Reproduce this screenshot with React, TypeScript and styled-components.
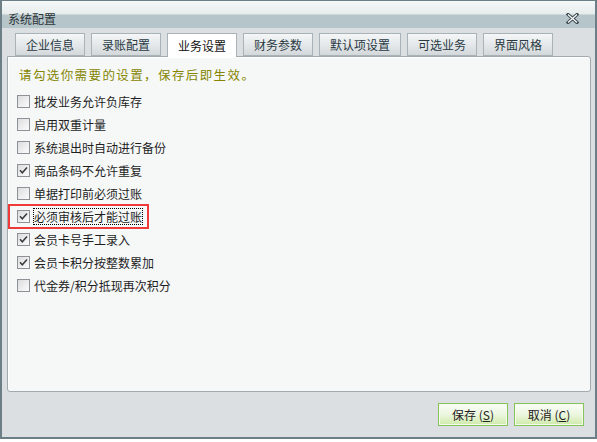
import styled, { createGlobalStyle } from "styled-components";

const GlobalStyle = createGlobalStyle`
    html, body {
        margin: 0;
        padding: 0;
        background: #ffffff;
    }
    body {
        font-family: "Noto Sans CJK SC", "DejaVu Sans", sans-serif;
        font-size: 12px;
        color: #222;
    }
`;

const tabs = ["企业信息", "录账配置", "业务设置", "财务参数", "默认项设置", "可选业务", "界面风格"];

const options = [
    { label: "批发业务允许负库存", checked: false },
    { label: "启用双重计量", checked: false },
    { label: "系统退出时自动进行备份", checked: false },
    { label: "商品条码不允许重复", checked: true },
    { label: "单据打印前必须过账", checked: false },
    { label: "必须审核后才能过账", checked: true, marked: true },
    { label: "会员卡号手工录入", checked: true },
    { label: "会员卡积分按整数累加", checked: true },
    { label: "代金券/积分抵现再次积分", checked: false },
];

const CheckBox = ({ checked }: { checked: boolean }) => (
    <StyledBox>
        {checked && (
            <svg width="9" height="9" viewBox="0 0 9 9">
                <path d="M1 4.2 L3.3 6.8 L8 1.4" fill="none" stroke="#3a3a3a" strokeWidth="1.5" />
            </svg>
        )}
    </StyledBox>
);

const CloseIcon = () => (
    <svg width="13" height="11" viewBox="0 0 13 11">
        <path d="M2 1.5 L11 9.5 M11 1.5 L2 9.5" stroke="#3d4a50" strokeWidth="3.2" strokeLinecap="square" />
        <path d="M2 1.5 L11 9.5 M11 1.5 L2 9.5" stroke="#ffffff" strokeWidth="1.2" />
    </svg>
);

export default function App() {
    return (
        <>
            <GlobalStyle />
            <StyledWindow>
                <StyledTitleBar>
                    <span>系统配置</span>
                    <StyledClose>
                        <CloseIcon />
                    </StyledClose>
                </StyledTitleBar>
                <StyledTabStrip>
                    {tabs.map((t, i) => (
                        <StyledTab key={t} $active={i === 2} $wide={t.length > 4}>
                            {t}
                        </StyledTab>
                    ))}
                </StyledTabStrip>
                <StyledPanel>
                    <StyledHint>请勾选你需要的设置，保存后即生效。</StyledHint>
                    <StyledList>
                        {options.map((o) => (
                            <StyledRow key={o.label} $marked={!!o.marked}>
                                <CheckBox checked={o.checked} />
                                <StyledLabel $focused={!!o.marked}>{o.label}</StyledLabel>
                            </StyledRow>
                        ))}
                    </StyledList>
                </StyledPanel>
                <StyledFooter>
                    <StyledButton>
                        保存 (<u>S</u>)
                    </StyledButton>
                    <StyledButton>
                        取消 (<u>C</u>)
                    </StyledButton>
                </StyledFooter>
            </StyledWindow>
        </>
    );
}

const StyledWindow = styled.div`
    width: 597px;
    height: 439px;
    box-sizing: border-box;
    border: 2px solid #6c7f86;
    border-top-width: 1px;
    background: #dcdfe2;
    display: flex;
    flex-direction: column;
`;

const StyledTitleBar = styled.div`
    height: 27px;
    flex: none;
    box-sizing: border-box;
    padding: 8px 6px 0 6px;
    display: flex;
    align-items: center;
    justify-content: space-between;
    background: linear-gradient(
        to bottom,
        #f6f8f8 0%,
        #e6ecec 48%,
        #b5c5c9 52%,
        #b5c5c9 100%
    );
    color: #2c3438;
    font-size: 12px;
`;

const StyledClose = styled.div`
    display: flex;
    align-items: center;
    margin-right: 10px;
`;

const StyledTabStrip = styled.div`
    display: flex;
    gap: 6px;
    margin-top: 5px;
    padding-left: 13px;
    height: 23px;
    flex: none;
`;

const StyledTab = styled.div<{ $active: boolean; $wide: boolean }>`
    width: ${(p) => (p.$wide ? 82 : 70)}px;
    box-sizing: border-box;
    height: ${(p) => (p.$active ? 24 : 23)}px;
    border: 1px solid #a9b2b7;
    border-bottom: ${(p) => (p.$active ? "none" : "1px solid #a9b2b7")};
    background: ${(p) =>
        p.$active ? "#ffffff" : "linear-gradient(to bottom, #f4f6f7 0%, #e3e7e9 55%, #d3d8db 100%)"};
    color: ${(p) => (p.$active ? "#111" : "#2a3a44")};
    display: flex;
    align-items: center;
    justify-content: center;
    font-size: 12px;
    position: relative;
    z-index: ${(p) => (p.$active ? 2 : 1)};
`;

const StyledPanel = styled.div`
    margin: 0 4px 0 5px;
    height: 336px;
    flex: none;
    box-sizing: border-box;
    border: 1px solid #a2aaae;
    border-radius: 0 3px 3px 3px;
    box-shadow: inset 1px 1px 0 #ffffff;
    background: #f6f8f8;
    padding: 10px 0 0 0;
`;

const StyledHint = styled.div`
    color: #858500;
    font-size: 12.5px;
    letter-spacing: 1.4px;
    line-height: 16px;
    padding-left: 11px;
`;

const StyledList = styled.div`
    display: flex;
    flex-direction: column;
    margin-top: 7px;
`;

const StyledRow = styled.div<{ $marked: boolean }>`
    height: ${(p) => (p.$marked ? 25 : 23)}px;
    margin: ${(p) => (p.$marked ? "-1px 0" : "0")};
    display: flex;
    align-items: center;
    gap: 4px;
    box-sizing: border-box;
    width: 141px;
    padding-left: ${(p) => (p.$marked ? 7 : 9)}px;
    border: ${(p) => (p.$marked ? "2px solid #f03a3a" : "none")};
`;

const StyledBox = styled.div`
    width: 13px;
    height: 13px;
    flex: none;
    box-sizing: border-box;
    border: 1px solid #8e9296;
    background: linear-gradient(135deg, #dcdcdc 0%, #f0f0f0 60%, #fafafa 100%);
    display: flex;
    align-items: center;
    justify-content: center;
`;

const StyledLabel = styled.span<{ $focused: boolean }>`
    white-space: nowrap;
    line-height: 15px;
    color: #1e1e1e;
    outline: ${(p) => (p.$focused ? "1px dotted #000" : "none")};
`;

const StyledFooter = styled.div`
    flex: 1;
    display: flex;
    justify-content: flex-end;
    align-items: flex-start;
    gap: 6px;
    padding: 11px 11px 0 0;
`;

const StyledButton = styled.button`
    width: 70px;
    height: 23px;
    box-sizing: border-box;
    border: 1px solid #86c45a;
    box-shadow: inset 0 0 0 1px #f4fbee;
    background: linear-gradient(to bottom, #fbfdf8 0%, #ecf6df 50%, #cfeaa9 100%);
    font-family: "Noto Sans CJK SC", "DejaVu Sans", sans-serif;
    font-size: 12px;
    color: #222;
    padding: 0;
    display: flex;
    align-items: center;
    justify-content: center;
    cursor: pointer;

    u {
        text-decoration: underline;
    }
`;
